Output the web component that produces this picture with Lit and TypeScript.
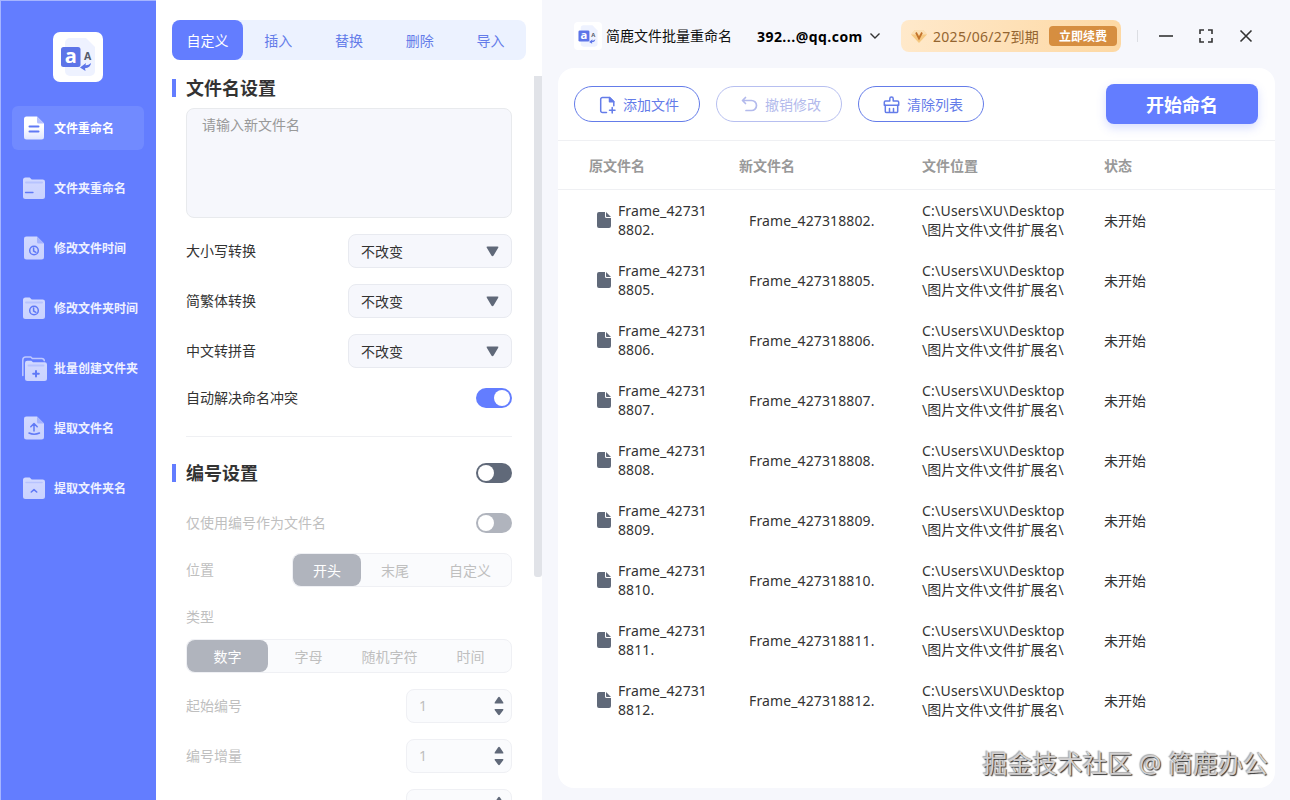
import { LitElement, html, css, svg } from 'lit';
import { customElement, property, state } from 'lit/decorators.js';
import { classMap } from 'lit/directives/class-map.js';
import type { TemplateResult, SVGTemplateResult } from 'lit';

interface NavItem
{
  label: string;
  icon: string;
}

const NAV: NavItem[] = [
  { label: '文件重命名', icon: 'file' },
  { label: '文件夹重命名', icon: 'folder' },
  { label: '修改文件时间', icon: 'fileTime' },
  { label: '修改文件夹时间', icon: 'folderTime' },
  { label: '批量创建文件夹', icon: 'folderAdd' },
  { label: '提取文件名', icon: 'fileUp' },
  { label: '提取文件夹名', icon: 'folderUp' },
];

const TABS = ['自定义', '插入', '替换', '删除', '导入'];
const SELECTS = ['大小写转换', '简繁体转换', '中文转拼音'];
const FILES = ['8802', '8805', '8806', '8807', '8808', '8809', '8810', '8811', '8812'];

// filled bodies, drawn without an outline
const FOLDER = svg`
  <path d="M2 5a2.500 2.500 0 0 1 2.500-2.500h4.200l2 2h11a2.300 2.300 0 0 1 2.300 2.300v14.700a2.500 2.500 0 0 1-2.500 2.500h-17a2.500 2.500 0 0 1-2.500-2.500z" fill="url(#shade)" stroke="none"/>`;
const FILE = svg`
  <path d="M5.500 1.500h10.500l7 7v13.500a2.500 2.500 0 0 1-2.500 2.500h-15a2.500 2.500 0 0 1-2.500-2.500v-18a2.500 2.500 0 0 1 2.500-2.500z" fill="url(#shade)" stroke="none"/>
  <path d="M16 1.500l7 7h-5.500a1.500 1.500 0 0 1-1.500-1.500z" fill="#b4c0ff" stroke="none"/>`;
const CLOCK = svg`
  <circle cx="13" cy="15.500" r="4.300"/>
  <path d="M12.600 13v3l2.300 1.300"/>`;

const ICONS: Record<string, SVGTemplateResult> = {
  file: svg`${FILE}<path d="M8.500 11.500h9M8.500 16.500h9" stroke-width="2"/>`,
  folder: svg`${FOLDER}<path d="M5 7.500h16" stroke="#cdd5ff" stroke-width="2"/><path d="M4.500 17.500h7.500" stroke-width="1.300"/>`,
  fileTime: svg`${FILE}${CLOCK}`,
  folderTime: svg`${FOLDER}<path d="M5 7.500h16" stroke="#cdd5ff" stroke-width="2"/>${CLOCK}`,
  folderAdd: svg`
    <path d="M1.800 20.500v-15.500a3 3 0 0 1 3-3h5l1.500 1.500h9.500a2.500 2.500 0 0 1 2.500 2.200" stroke="#d6dcff" stroke-width="1.500"/>
    <path d="M4 8a2.300 2.300 0 0 1 2.300-2.300h4l1.700 1.500h11.700a2.300 2.300 0 0 1 2.300 2.300v14a2.500 2.500 0 0 1-2.500 2.500h-17a2.500 2.500 0 0 1-2.500-2.500z" fill="url(#shade)" stroke="none"/>
    <path d="M7.500 10.500h15" stroke="#cdd5ff" stroke-width="2"/>
    <path d="M15 16v5.600M12.200 18.800h5.600" stroke-width="2"/>`,
  fileUp: svg`${FILE}<path d="M13 16v-7.500M9.800 11.700l3.200-3.200 3.200 3.200M8 18q5 2.400 10.500 0" stroke-width="1.500"/>`,
  folderUp: svg`${FOLDER}<path d="M5 7.500h16" stroke="#cdd5ff" stroke-width="1.500"/><path d="M10.300 17l2.700-2.300 2.700 2.300" stroke-width="1.600"/>`,
};

@customElement('nav-icon')
export class NavIcon extends LitElement
{
  static styles = css`
    :host{
      display: block;
      width: 26px;
      height: 26px;
    }
    svg{
      display: block;
    }
    .dim{
      opacity: .8;
    }
  `;

  @property({ type: String })
  name = 'file';

  render(): TemplateResult
  {
    const lit = this.name === 'file';
    return html`
      <svg class=${classMap({ dim: !lit })} width="26" height="26" viewBox="0 0 26 26" fill="none"
        stroke="#6079f5" stroke-width="1.500" stroke-linecap="round" stroke-linejoin="round">
        <defs>
          <linearGradient id="shade" x1="0" y1="0" x2="0" y2="1">
            <stop offset="0" stop-color=${lit ? '#fff' : '#eef0ff'}/>
            <stop offset=".45" stop-color=${lit ? '#fff' : '#e9ecff'}/>
            <stop offset="1" stop-color=${lit ? '#dfe5ff' : '#e4e8ff'}/>
          </linearGradient>
        </defs>
        ${ICONS[this.name]}
      </svg>`;
  }
}

@customElement('app-logo')
export class AppLogo extends LitElement
{
  static styles = css`
    :host{
      display: block;
      flex: none;
    }
    svg{
      display: block;
      width: 100%;
      height: 100%;
    }
    text{
      font-family: "Open Sans", "Noto Sans", sans-serif;
      font-weight: 700;
    }
  `;

  render(): TemplateResult
  {
    return html`
      <svg viewBox="0 0 50 50">
        <rect width="50" height="50" rx="7" fill="#fff"/>
        <path d="M17 6h16l9 9v24a5 5 0 0 1-5 5h-20a5 5 0 0 1-5-5v-28a5 5 0 0 1 5-5z" fill="#eef2ff"/>
        <rect x="8" y="15" width="19.500" height="20" rx="2.500" fill="#5c74e8"/>
        <text x="11.700" y="31" font-size="20" fill="#fff">a</text>
        <text x="31" y="27.500" font-size="10.500" fill="#555b6a">A</text>
        <path d="M27 35.500l6-4.500-.5 2.300q3 .2 5.500-2.300-.5 5-6 5.200l.5 2.800z" fill="#5c74e8"/>
      </svg>`;
  }
}

@customElement('toggle-switch')
export class ToggleSwitch extends LitElement
{
  static styles = css`
    :host{
      display: block;
      flex: none;
    }
    .track{
      display: flex;
      box-sizing: border-box;
      width: 36px;
      height: 20px;
      padding: 2px;
      border-radius: 10px;
      background: #606979;
    }
    .track.on{
      justify-content: flex-end;
      background: #637dff;
    }
    .track.disabled{
      background: #b0b4bd;
    }
    .knob{
      width: 16px;
      height: 16px;
      border-radius: 50%;
      background: #fff;
    }
  `;

  @property({ type: Boolean })
  on = false;

  @property({ type: Boolean })
  disabled = false;

  render(): TemplateResult
  {
    return html`
      <div class=${classMap({ track: true, on: this.on, disabled: this.disabled })}>
        <div class="knob"></div>
      </div>`;
  }
}

@customElement('app-root')
export class AppRoot extends LitElement
{
  static styles = [
    css`
      :host{
        --primary: #637dff;
        --page: #f6f7fc;
        --line: #eff0f3;
        --text: #333;
        --muted: #bfbfbf;
        display: flex;
        position: relative;
        width: 1290px;
        height: 800px;
        overflow: hidden;
        box-sizing: border-box;
        font-family: "Noto Sans", "Noto Sans CJK SC", sans-serif;
        font-size: 14px;
        line-height: 20px;
        color: var(--text);
        background: var(--page);
      }
      svg{
        display: block;
        flex: none;
      }

      .sidebar{
        flex: none;
        box-sizing: border-box;
        width: 156px;
        padding: 31px 12px 0 11px;
        border-left: 1px solid #a6b5ff;
        border-top: 1px solid #a6b5ff;
        background: var(--primary);
      }
      .sidebar app-logo{
        width: 50px;
        height: 50px;
        margin: 0 0 24px 41px;
      }
      .nav{
        display: flex;
        flex-direction: column;
        gap: 16px;
      }
      .nav-item{
        display: flex;
        align-items: center;
        gap: 7px;
        height: 44px;
        padding-left: 9px;
        border-radius: 6px;
        font-size: 12px;
        font-weight: 700;
        color: #eef1ff;
        white-space: nowrap;
      }
      .nav-item span{
        padding-top: 2px;
      }
      .nav-item.active{
        color: #fff;
        background: #718aff;
      }

      .settings{
        display: flex;
        flex-direction: column;
        flex: none;
        width: 386px;
        height: 800px;
        background: #fff;
      }
      .tabs{
        display: grid;
        grid-template-columns: repeat(5, 1fr);
        flex: none;
        height: 40px;
        margin: 20px 16px 16px;
        border-radius: 8px;
        background: #ecf2ff;
        color: #647ce9;
      }
      .tab{
        display: flex;
        align-items: center;
        justify-content: center;
        padding-top: 2px;
        border-radius: 8px;
      }
      .tab.active{
        background: var(--primary);
        color: #fff;
      }
      .scroll{
        display: flex;
        flex: 1;
        min-height: 0;
        overflow: hidden;
      }
      .form{
        flex: 1;
        padding: 0 22px 0 30px;
      }
      .bar{
        flex: none;
        width: 8px;
        height: 501px;
        border-radius: 0 0 3px 3px;
        background: #e1e3e8;
      }
      .heading{
        display: flex;
        align-items: center;
        height: 24px;
        margin-left: -14px;
        font-size: 18px;
        font-weight: 700;
      }
      .heading::before{
        content: '';
        width: 4px;
        height: 18px;
        margin-right: 10px;
        background: var(--primary);
      }
      .heading toggle-switch{
        margin-left: auto;
      }
      .name-box{
        box-sizing: border-box;
        height: 110px;
        margin: 8px 0 16px;
        padding: 6px 15px;
        border: 1px solid #e8eaed;
        border-radius: 8px;
        background: var(--page);
        color: #999;
      }
      .row{
        display: flex;
        align-items: center;
        justify-content: space-between;
        height: 34px;
        margin-bottom: 16px;
      }
      .row.auto{
        height: 28px;
        margin: 0 0 24px;
      }
      .row.only{
        margin: 21px 0 13px;
      }
      .row.place{
        margin-bottom: 20px;
      }
      .disabled{
        color: var(--muted);
      }
      .select{
        display: flex;
        align-items: center;
        justify-content: space-between;
        box-sizing: border-box;
        width: 164px;
        height: 34px;
        padding: 1px 12px 0;
        border: 1px solid #e8eaf0;
        border-radius: 8px;
        background: var(--page);
      }
      .rule{
        height: 1px;
        margin-bottom: 24px;
        background: var(--line);
      }
      .segment{
        display: grid;
        box-sizing: border-box;
        height: 34px;
        border: 1px solid #eff0f4;
        border-radius: 8px;
        background: #fafbfd;
        color: var(--muted);
      }
      .segment.three{
        grid-template-columns: 68px 68px 82px;
        width: 220px;
      }
      .segment.four{
        grid-template-columns: repeat(4, 1fr);
        margin: 12px 0 16px;
      }
      .segment > div{
        display: flex;
        align-items: center;
        justify-content: center;
        padding-top: 1px;
        border-radius: 8px;
      }
      .segment .active{
        background: #b0b4bd;
        color: #fff;
      }
      .stepper{
        display: flex;
        align-items: center;
        justify-content: space-between;
        box-sizing: border-box;
        width: 106px;
        height: 34px;
        padding: 0 7px 0 12px;
        border: 1px solid #eff0f4;
        border-radius: 8px;
        background: #fafbfd;
      }

      .main{
        display: flex;
        flex-direction: column;
        flex: 1;
        min-width: 0;
        padding: 20px 15px 12px 16px;
      }
      .titlebar{
        display: flex;
        align-items: center;
        flex: none;
        height: 32px;
        margin-bottom: 16px;
        padding-left: 16px;
        color: #111;
        white-space: nowrap;
      }
      .titlebar app-logo{
        width: 28px;
        height: 28px;
        margin-right: 4px;
      }
      .title{
        width: 126px;
        margin-right: 25px;
      }
      .account{
        width: 106px;
        margin-right: 6px;
        padding-top: 1px;
        font-family: "Open Sans", "Noto Sans", sans-serif;
        font-weight: 700;
        letter-spacing: .45px;
        color: #000;
      }
      .vip{
        display: flex;
        align-items: center;
        box-sizing: border-box;
        width: 220px;
        height: 32px;
        margin-left: 20px;
        padding: 0 4px 0 10px;
        border-radius: 8px;
        background: linear-gradient(100deg, #ffe9cb, #fdd8a3);
        color: #946530;
      }
      .expiry{
        width: 106px;
        margin: 0 10px 0 6px;
        padding-top: 1px;
        letter-spacing: .3px;
      }
      .renew{
        display: flex;
        align-items: center;
        justify-content: center;
        box-sizing: border-box;
        width: 68px;
        height: 20px;
        padding-top: 1px;
        border-radius: 4px;
        background: #d68e40;
        color: #fff;
        font-size: 12px;
        font-weight: 700;
      }
      .split{
        width: 1px;
        height: 12px;
        margin: 0 20px 0 16px;
        background: #dcdee3;
      }
      .window{
        display: flex;
        gap: 24px;
      }
      .card{
        display: flex;
        flex-direction: column;
        flex: 1;
        border-radius: 16px;
        background: #fff;
      }
      .toolbar{
        display: flex;
        align-items: center;
        gap: 16px;
        flex: none;
        height: 72px;
        padding: 0 17px 0 16px;
        border-bottom: 1px solid var(--line);
      }
      .tool{
        display: flex;
        align-items: center;
        box-sizing: border-box;
        width: 126px;
        height: 36px;
        padding: 1px 0 0 23px;
        gap: 6px;
        border: 1px solid #647ce9;
        border-radius: 18px;
        color: #647ce9;
      }
      .tool.off{
        border-color: #b7bff0;
        color: #b3baec;
      }
      .start{
        display: flex;
        align-items: center;
        justify-content: center;
        box-sizing: border-box;
        width: 152px;
        height: 40px;
        margin-left: auto;
        padding-top: 2px;
        border-radius: 8px;
        background: var(--primary);
        box-shadow: 0 4px 10px rgb(99 125 255 / 25%);
        color: #fff;
        font-size: 18px;
        font-weight: 700;
      }
      .line{
        display: grid;
        grid-template-columns: 150px 183px 182px 1fr;
        align-items: center;
        height: 60px;
        padding-left: 31px;
        line-height: 19px;
      }
      .line.head{
        height: 48px;
        border-bottom: 1px solid var(--line);
        font-weight: 700;
        color: #999;
      }
      .origin{
        display: flex;
        align-items: center;
        gap: 7px;
        padding-left: 8px;
      }
      .origin div{
        width: 92px;
        letter-spacing: .1px;
      }
      .fresh{
        padding-left: 10px;
        letter-spacing: .12px;
      }
      .path span{
        letter-spacing: .22px;
      }
      .watermark{
        position: absolute;
        right: 22px;
        bottom: 20px;
        font-size: 25px;
        line-height: 34px;
        color: #d2d0d0;
        text-shadow: 1px 1px 1px #333, -1px -1px 1px #aaa;
        white-space: nowrap;
      }
    `
  ];

  @state()
  private nav = 0;

  @state()
  private tab = 0;

  render(): TemplateResult
  {
    return html`
      ${this.sidebar()}
      ${this.settings()}
      <div class="main">
        ${this.titlebar()}
        <div class="card">
          ${this.toolbar()}
          <div class="line head">
            <div>原文件名</div><div>新文件名</div><div>文件位置</div><div>状态</div>
          </div>
          ${FILES.map((id) => this.fileRow(id))}
        </div>
      </div>
      <div class="watermark">掘金技术社区 @ 简鹿办公</div>
    `;
  }

  private sidebar(): TemplateResult
  {
    return html`
      <div class="sidebar">
        <app-logo></app-logo>
        <div class="nav">
          ${NAV.map((item, index) => html`
            <div class=${classMap({ 'nav-item': true, active: index === this.nav })} @click=${() => { this.nav = index; }}>
              <nav-icon name=${item.icon}></nav-icon>
              <span>${item.label}</span>
            </div>`)}
        </div>
      </div>`;
  }

  private settings(): TemplateResult
  {
    return html`
      <div class="settings">
        <div class="tabs">
          ${TABS.map((label, index) => html`
            <div class=${classMap({ tab: true, active: index === this.tab })} @click=${() => { this.tab = index; }}>${label}</div>`)}
        </div>
        <div class="scroll">
          <div class="form">
            <div class="heading">文件名设置</div>
            <div class="name-box">请输入新文件名</div>
            ${SELECTS.map((label) => html`
              <div class="row">
                <span>${label}</span>
                <div class="select">
                  <span>不改变</span>
                  <svg width="13" height="11" viewBox="0 0 13 11">
                    <path d="M1.500.500h10q1.500 0 .7 1.300l-4.600 7.700q-1.100 1.500-2.200 0l-4.600-7.700q-.8-1.300.7-1.300z" fill="#606979"/>
                  </svg>
                </div>
              </div>`)}
            <div class="row auto">
              <span>自动解决命名冲突</span>
              <toggle-switch on></toggle-switch>
            </div>
            <div class="rule"></div>
            <div class="heading">编号设置<toggle-switch></toggle-switch></div>
            <div class="row only disabled">
              <span>仅使用编号作为文件名</span>
              <toggle-switch disabled></toggle-switch>
            </div>
            <div class="row place disabled">
              <span>位置</span>
              <div class="segment three">
                <div class="active">开头</div><div>末尾</div><div>自定义</div>
              </div>
            </div>
            <div class="disabled">类型</div>
            <div class="segment four">
              <div class="active">数字</div><div>字母</div><div>随机字符</div><div>时间</div>
            </div>
            ${this.stepper('起始编号', '1')}
            ${this.stepper('编号增量', '1')}
            ${this.stepper('', '')}
          </div>
          <div class="bar"></div>
        </div>
      </div>`;
  }

  private stepper(label: string, value: string): TemplateResult
  {
    return html`
      <div class="row disabled">
        <span>${label}</span>
        <div class="stepper">
          <span>${value}</span>
          <svg width="10" height="20" viewBox="0 0 10 20" fill="#606979">
            <path d="M1.200 7.500h7.600q1.200 0 .4-1.200l-3.200-4.800q-1-1.400-2 0l-3.200 4.800q-.8 1.200.4 1.200z"/>
            <path d="M1.200 13h7.600q1.200 0 .4 1.200l-3.200 4.300q-1 1.400-2 0l-3.200-4.300q-.8-1.200.4-1.200z"/>
          </svg>
        </div>
      </div>`;
  }

  private titlebar(): TemplateResult
  {
    return html`
      <div class="titlebar">
        <app-logo></app-logo>
        <div class="title">简鹿文件批量重命名</div>
        <div class="account">392...@qq.com</div>
        <svg width="12" height="12" viewBox="0 0 12 12" fill="none" stroke="#333" stroke-width="1.400">
          <path d="M1.500 3.500l4.500 4.500 4.500-4.500"/>
        </svg>
        <div class="vip">
          <svg width="16" height="16" viewBox="0 0 16 16">
            <path d="M4 2h8l4 4.500-8 8.500-8-8.500z" fill="#f6c982"/>
            <path d="M4 2h8l4 4.500h-16z" fill="#fbe0b5"/>
            <path d="M5 4.500l3 6 3-6" fill="none" stroke="#c4742c" stroke-width="1.800"/>
          </svg>
          <div class="expiry">2025/06/27到期</div>
          <div class="renew">立即续费</div>
        </div>
        <div class="split"></div>
        <div class="window">
          <svg width="16" height="16" viewBox="0 0 16 16" fill="none" stroke="#333" stroke-width="1.600">
            <path d="M1 8h14"/>
          </svg>
          <svg width="16" height="16" viewBox="0 0 16 16" fill="none" stroke="#333" stroke-width="1.600">
            <path d="M2 6v-4h4M10 2h4v4M14 10v4h-4M6 14h-4v-4"/>
          </svg>
          <svg width="16" height="16" viewBox="0 0 16 16" fill="none" stroke="#333" stroke-width="1.600">
            <path d="M2.500 2.500l11 11M13.500 2.500l-11 11"/>
          </svg>
        </div>
      </div>`;
  }

  private toolbar(): TemplateResult
  {
    return html`
      <div class="toolbar">
        <div class="tool">
          <svg width="19" height="18" viewBox="0 0 19 18" fill="none" stroke="currentColor" stroke-width="1.500"
            stroke-linecap="round" stroke-linejoin="round">
            <path d="M8.500 16.500h-4a1.800 1.800 0 0 1-1.800-1.800v-11.400a1.800 1.800 0 0 1 1.800-1.800h7l4.300 4.300v4"/>
            <path d="M11.500 1.500v4.300h4.300z" fill="currentColor"/>
            <path d="M14.200 11.500v5.500M11.500 14.200h5.500"/>
          </svg>
          添加文件
        </div>
        <div class="tool off">
          <svg width="19" height="18" viewBox="0 0 19 18" fill="none" stroke="currentColor" stroke-width="1.700"
            stroke-linecap="round" stroke-linejoin="round">
            <path d="M5.500 1.500l-3 3 3 3M2.800 4.500h8.700a5 5 0 0 1 0 10h-5.500"/>
          </svg>
          撤销修改
        </div>
        <div class="tool">
          <svg width="19" height="18" viewBox="0 0 19 18" fill="none" stroke="currentColor" stroke-width="1.500"
            stroke-linecap="round" stroke-linejoin="round">
            <path d="M7.800 5v-2.300a1.700 1.700 0 0 1 3.400 0v2.300h4.300a1.200 1.200 0 0 1 1.200 1.200v3h-14.400v-3a1.200 1.200 0 0 1 1.200-1.200z"/>
            <path d="M3.300 9.200v6.200a1.200 1.200 0 0 0 1.200 1.200h10a1.200 1.200 0 0 0 1.200-1.200v-6.200M7.500 12.500v4M11.500 12.500v4"/>
          </svg>
          清除列表
        </div>
        <div class="start">开始命名</div>
      </div>`;
  }

  private fileRow(id: string): TemplateResult
  {
    return html`
      <div class="line">
        <div class="origin">
          <svg width="14" height="16" viewBox="0 0 14 16" fill="#606979">
            <path d="M2 0h6v4.500a1.500 1.500 0 0 0 1.500 1.500h4.500v8a2 2 0 0 1-2 2h-10a2 2 0 0 1-2-2v-12a2 2 0 0 1 2-2z"/>
            <path d="M9 0l5 5h-4.200a.8.8 0 0 1-.8-.8z"/>
          </svg>
          <div>Frame_42731<br>${id}.</div>
        </div>
        <div class="fresh">Frame_42731${id}.</div>
        <div class="path"><span>C:\\Users\\XU\\Desktop</span><br>\\图片文件\\文件扩展名\\</div>
        <div>未开始</div>
      </div>`;
  }
}
